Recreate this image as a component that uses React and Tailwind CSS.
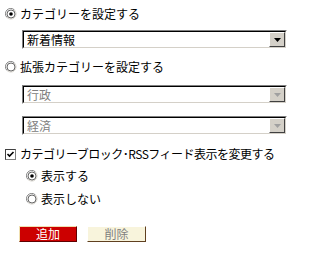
import React from "react";

function Radio({ checked }) {
  return (
    <span className="relative inline-block w-[12px] h-[12px] shrink-0">
      <svg width="12" height="12" viewBox="0 0 12 12" className="block">
        <path d="M2 9.5 A4.8 4.8 0 0 1 9.5 2" fill="none" stroke="#808080" strokeWidth="1" />
        <path d="M9.5 2 A4.8 4.8 0 0 1 2 9.5" fill="none" stroke="#d4d0c8" strokeWidth="1" />
        <circle cx="6" cy="6" r="4" fill="#fff" stroke="#404040" strokeWidth="0.8" />
        {checked && <circle cx="6" cy="6" r="1.8" fill="#000" />}
      </svg>
    </span>
  );
}

function Checkbox() {
  return (
    <span className="inline-block w-[11px] h-[11px] shrink-0 border border-t-[#404040] border-l-[#404040] border-b-[#808080] border-r-[#808080] bg-white relative">
      <svg width="9" height="9" viewBox="0 0 9 9" className="block">
        <path d="M1.5 4 L3.5 6 L7.5 2" fill="none" stroke="#000" strokeWidth="1.6" />
      </svg>
    </span>
  );
}

function Select({ text, disabled }) {
  return (
    <div className="ml-[22px] w-[265px] h-[19px] flex border-t border-l border-t-[#808080] border-l-[#808080] border-b border-r border-b-[#ffffff] border-r-[#ffffff]">
      <div className="flex-1 flex border-t border-l border-t-black border-l-black border-b border-r border-b-[#d4d0c8] border-r-[#d4d0c8] bg-white">
        <div
          className={`flex-1 pl-[3px] text-[12px] leading-[15px] ${disabled ? "text-[#808080]" : "text-black"}`}
        >
          {text}
        </div>
        <div className="w-[16px] h-[15px] bg-[#d4d0c8] border-t border-l border-t-[#ffffff] border-l-[#ffffff] border-b border-r border-b-[#404040] border-r-[#404040] flex items-center justify-center">
          <svg width="7" height="4" viewBox="0 0 7 4" className="block">
            <path d="M0 0 H7 L3.5 4 Z" fill={disabled ? "#a0a0a0" : "#000"} />
          </svg>
        </div>
      </div>
    </div>
  );
}

export default function App() {
  return (
    <div
      className="w-[294px] h-[253px] bg-white text-black text-[12px] leading-[14px] flex flex-col"
      style={{ fontFamily: '"Noto Sans CJK JP", "Noto Sans", sans-serif' }}
    >
      <div className="mt-[7px] flex items-center gap-[3px] pl-[5px]">
        <Radio checked />
        <span>カテゴリーを設定する</span>
      </div>
      <div className="mt-[9px]">
        <Select text="新着情報" />
      </div>
      <div className="mt-[11px] flex items-center gap-[3px] pl-[5px]">
        <Radio />
        <span>拡張カテゴリーを設定する</span>
      </div>
      <div className="mt-[11px]">
        <Select text="行政" disabled />
      </div>
      <div className="mt-[12px]">
        <Select text="経済" disabled />
      </div>
      <div className="mt-[12px] flex items-center gap-[4px] pl-[5px]">
        <Checkbox />
        <span className="tracking-[-0.5px]">カテゴリーブロック･RSSフィード表示を変更する</span>
      </div>
      <div className="mt-[8px] flex items-center gap-[3px] pl-[26px]">
        <Radio checked />
        <span>表示する</span>
      </div>
      <div className="mt-[9px] flex items-center gap-[3px] pl-[26px]">
        <Radio />
        <span>表示しない</span>
      </div>
      <div className="mt-[20px] flex gap-[10px] pl-[19px]">
        <button className="w-[58px] h-[16px] bg-[#cc0000] text-white text-[12px] leading-[12px] border border-t-[#f0e0b0] border-l-[#f0e0b0] border-b-[#600000] border-r-[#600000] flex items-center justify-center">
          追加
        </button>
        <button className="w-[59px] h-[16px] bg-[#f8f4dc] text-[#808080] text-[12px] leading-[12px] border border-t-[#ffffff] border-l-[#ffffff] border-b-[#604020] border-r-[#604020] flex items-center justify-center">
          削除
        </button>
      </div>
    </div>
  );
}
